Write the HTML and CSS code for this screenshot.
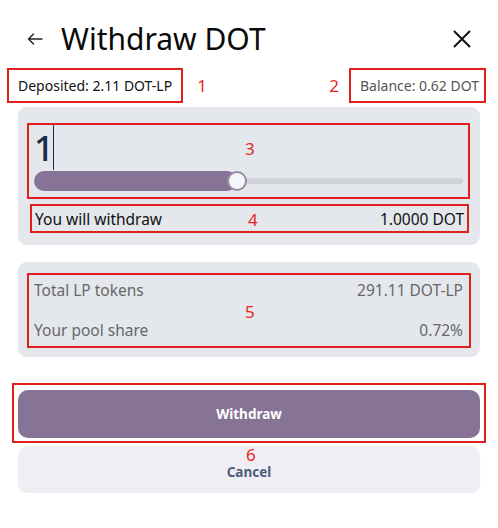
FILE: index.html
```html
<!DOCTYPE html>
<html>
<head>
<meta charset="utf-8">
<link rel="stylesheet" href="styles.css">
</head>
<body>
<div class="page">
  <header class="header">
    <svg class="back" width="16" height="12" viewBox="0 0 16 12"><path d="M15 6H1.5M6.5 1L1.5 6l5 5" fill="none" stroke="#222" stroke-width="1.4" stroke-linecap="round" stroke-linejoin="round"/></svg>
    <h1 class="title">Withdraw DOT</h1>
    <svg class="close" width="20" height="20" viewBox="0 0 20 20"><path d="M2 2L18 18M18 2L2 18" fill="none" stroke="#111" stroke-width="2"/></svg>
  </header>

  <div class="toprow">
    <div class="mark deposited">Deposited: 2.11 DOT-LP</div>
    <span class="num num-inline n1">1</span>
    <span class="spacer"></span>
    <span class="num num-inline n2">2</span>
    <div class="mark balance">Balance: 0.62 DOT</div>
  </div>

  <section class="card card-input">
    <div class="mark box3">
      <div class="amount"><span class="amount-val">1</span><span class="caret"></span></div>
      <div class="slider">
        <div class="fill" style="width:203px"></div>
        <div class="rest"></div>
        <div class="thumb" style="left:193px"></div>
      </div>
      <span class="num num-abs n3">3</span>
    </div>
    <div class="mark box4">
      <span>You will withdraw</span>
      <span>1.0000 DOT</span>
      <span class="num num-abs n4">4</span>
    </div>
  </section>

  <section class="card card-info">
    <div class="mark box5">
      <div class="row"><span>Total LP tokens</span><span>291.11 DOT-LP</span></div>
      <div class="row"><span>Your pool share</span><span>0.72%</span></div>
      <span class="num num-abs n5">5</span>
    </div>
  </section>

  <div class="mark box6">
    <button class="btn btn-primary">Withdraw</button>
    <span class="num num-abs n6">6</span>
  </div>
  <button class="btn btn-cancel">Cancel</button>
</div>
</body>
</html>
```

FILE: styles.css
```css
* { box-sizing: border-box; }
html, body { margin: 0; padding: 0; background: #fff; }
body {
  font-family: "Noto Sans", "Liberation Sans", sans-serif;
  color: #111;
  width: 498px;
}
.page { width: 498px; }

.header {
  display: flex;
  align-items: center;
  height: 38px;
  margin-top: 20px;
  padding: 0 26px 0 27px;
}
.back { flex: none; }
.title {
  margin: 0 0 0 18px;
  font-size: 30px;
  font-weight: 400;
  line-height: 38px;
  color: #0a0a0a;
  flex: 1;
}
.close { flex: none; }

.mark { border: 2px solid #e0201b; position: relative; }

.toprow {
  display: flex;
  align-items: center;
  margin-top: 10px;
  padding: 0 12px 0 7px;
  height: 35px;
}
.deposited, .balance {
  height: 35px;
  display: flex;
  align-items: center;
  font-size: 14px;
}
.deposited { padding: 0 9px 0 9px; color: #111; }
.balance { padding: 0 5px 0 9px; color: #555; }
.spacer { flex: 1; }

.num {
  color: #e8281e;
  font-size: 17px;
  line-height: 20px;
}
.n1 { margin-left: 14px; }
.n2 { margin-right: 10px; }
.num-abs { position: absolute; left: 216px; }
.n3 { top: 14px; }
.n4 { top: 4px; }
.n5 { top: 27px; }
.n6 { top: 61px; left: 232px; line-height: 17px; }

.card {
  background: #e4e7ec;
  border-radius: 9px;
  margin: 0 18px;
}
.card-input { margin-top: 4px; padding: 16px 10px 12px 9px; height: 138px; }

.box3 { height: 76px; padding: 0 5px; }
.amount { display: flex; height: 46px; align-items: flex-start; }
.amount-val {
  font-size: 35px;
  font-weight: 500;
  line-height: 46px;
  color: #1b2b4b;
  letter-spacing: -2px;
}
.caret { width: 1px; height: 45px; background: #1b2b4b; margin-left: 1px; }

.slider {
  position: relative;
  display: flex;
  align-items: center;
  height: 20px;
}
.fill { height: 20px; border-radius: 10px; background: #877396; flex: none; }
.rest { flex: 1; height: 6px; border-radius: 3px; background: #cfd2d8; margin-left: -4px; }
.thumb {
  position: absolute;
  top: 0;
  width: 20px;
  height: 20px;
  border-radius: 50%;
  background: #f3f6fa;
  border: 2px solid #9a8aa6;
}

.box4 {
  margin: 5px 1px 0 3px;
  height: 29px;
  display: flex;
  justify-content: space-between;
  align-items: center;
  padding: 0 3px 0 3px;
  font-size: 15.5px;
  color: #111;
}

.card-info { margin-top: 17px; padding: 11px 9px 9px 9px; height: 95px; }
.box5 {
  height: 75px;
  padding: 5px 6px 0 5px;
  display: flex;
  flex-direction: column;
  gap: 20px;
  color: #676767;
  font-size: 15.5px;
}
.row { display: flex; justify-content: space-between; height: 20px; line-height: 20px; align-items: center; }

.box6 {
  margin: 26px 12px 0 12px;
  height: 60px;
  padding: 5px 4px 3px 4px;
}
.btn {
  display: block;
  width: 100%;
  border: 0;
  border-radius: 10px;
  font-family: inherit;
  font-weight: 700;
  font-size: 13.5px;
  cursor: pointer;
}
.btn-primary { height: 48px; background: #877396; color: #fff; }
.btn-cancel {
  width: 462px;
  margin: 3px 18px 0 18px;
  height: 47px;
  padding-top: 5px;
  line-height: 16px;
  background: #f0eef4;
  color: #4b5d7c;
  box-shadow: 0 1px 2px rgba(0,0,0,0.04);
}
```
